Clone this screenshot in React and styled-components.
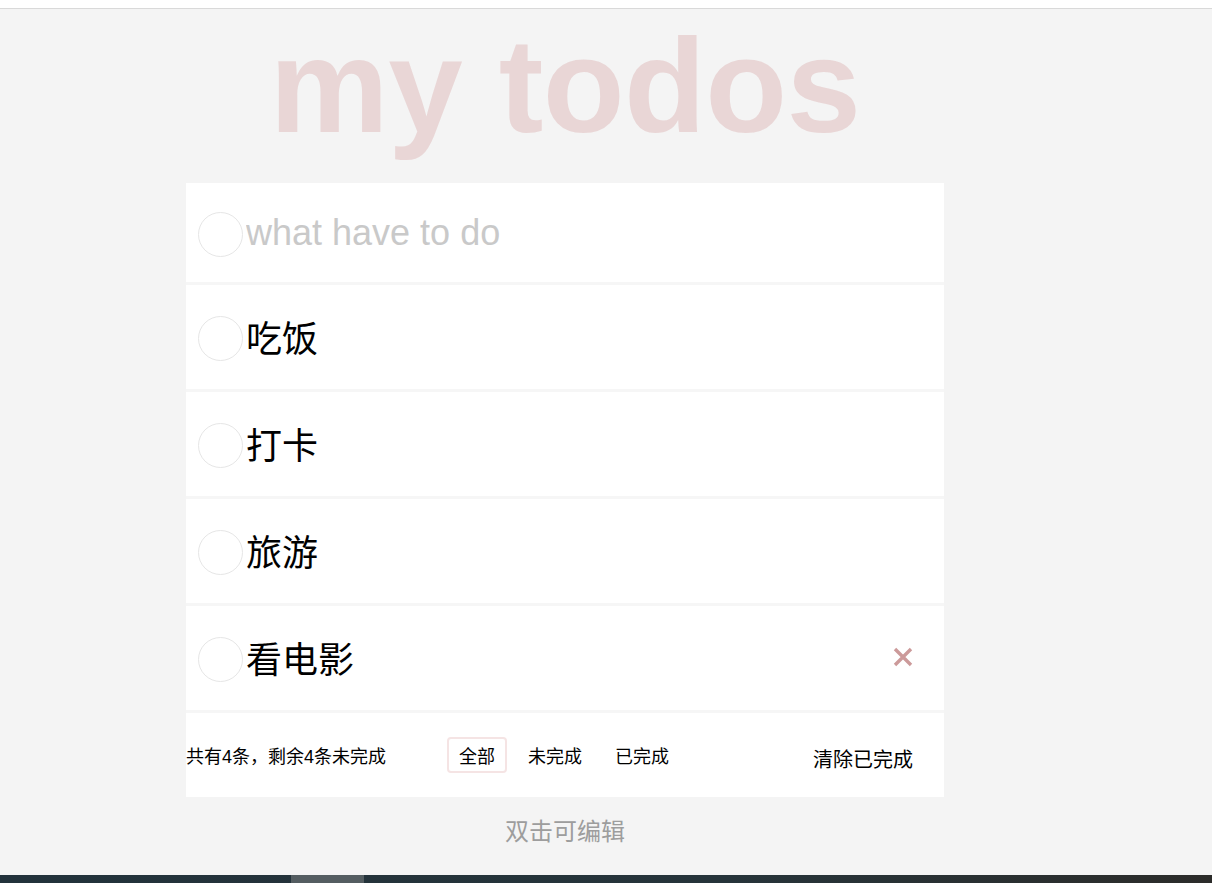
import React from "react";
import styled, { createGlobalStyle } from "styled-components";

const GlobalStyle = createGlobalStyle`
  html, body {
    margin: 0;
    padding: 0;
    background: #fff;
  }
  body {
    font-family: "Liberation Sans", "Noto Sans CJK SC", sans-serif;
    color: #000;
  }
`;

const Page = styled.div`
  margin-top: 8px;
  border-top: 1px solid #d9d9d9;
  background: #f4f4f4;
  height: 874px;
  display: flex;
  flex-direction: column;
`;

const Main = styled.div`
  flex: 1;
  width: 1130px;
  display: flex;
  flex-direction: column;
  align-items: center;
`;

const Title = styled.h1`
  margin: 3px 0 17px;
  height: 154px;
  font-family: "Liberation Sans", sans-serif;
  font-weight: bold;
  font-size: 134px;
  letter-spacing: -0.6px;
  color: rgba(175, 47, 47, 0.15);
  line-height: 148px;
`;

const Card = styled.section`
  width: 758px;
  background: #fff;
`;

const Row = styled.div`
  height: ${(p) => p.h}px;
  border-bottom: 3px solid #f6f6f6;
  display: flex;
  align-items: center;
  padding: 0 31px 0 12px;
`;

const Toggle = styled.span`
  width: 45px;
  height: 45px;
  box-sizing: border-box;
  border: 1px solid #e6e6e6;
  border-radius: 50%;
  flex-shrink: 0;
  margin-top: ${(p) => p.offset || 0}px;
`;

const NewTodo = styled.input`
  flex: 1;
  border: none;
  outline: none;
  margin-left: 3px;
  padding: 0;
  font-family: "Liberation Sans", "Noto Sans CJK SC", sans-serif;
  font-size: 36px;
  color: #000;
  background: transparent;
  &::placeholder {
    color: #c9c9c9;
  }
`;

const Label = styled.label`
  flex: 1;
  margin-left: 3px;
  padding-top: 6px;
  font-size: 36px;
  line-height: 1.2;
`;

const Destroy = styled.button`
  border: none;
  background: none;
  padding: 0;
  width: 20px;
  height: 20px;
  display: flex;
  margin-top: -3px;
  cursor: pointer;
`;

const Footer = styled.footer`
  height: 84px;
  display: grid;
  grid-template-columns: 1fr auto 1fr;
  align-items: center;
`;

const Count = styled.span`
  justify-self: start;
  font-size: 18px;
`;

const Filters = styled.ul`
  display: flex;
  gap: 9px;
  margin: 0 0 0 -2px;
  padding: 0;
  list-style: none;
`;

const Filter = styled.li`
  padding: 0 10px;
  height: 32px;
  display: flex;
  align-items: center;
  border: 2px solid ${(p) => (p.active ? "rgba(175, 47, 47, 0.13)" : "transparent")};
  border-radius: 4px;
  font-size: 18px;
`;

const Clear = styled.button`
  justify-self: end;
  margin: 6px 31px 0 0;
  border: none;
  background: none;
  padding: 0;
  font-family: "Liberation Sans", "Noto Sans CJK SC", sans-serif;
  font-size: 20px;
  color: #000;
`;

const Hint = styled.p`
  margin: 15px 0 0;
  font-size: 24px;
  color: #9d9d9d;
`;

const Taskbar = styled.div`
  height: 8px;
  display: flex;
  background: linear-gradient(90deg, #22323b 0%, #26343a 60%, #2c2c2a 100%);
`;

const TaskGap = styled.div`
  width: 291px;
`;

const TaskActive = styled.div`
  width: 73px;
  background: #545d61;
`;

const todos = ["吃饭", "打卡", "旅游", "看电影"];

export default function App() {
  return (
    <>
      <GlobalStyle />
      <Page>
        <Main>
          <Title>my todos</Title>
          <Card>
            <Row h={99}>
              <Toggle offset={4} />
              <NewTodo placeholder="what have to do" />
            </Row>
            {todos.map((t, i) => (
              <Row h={104} key={t}>
                <Toggle offset={2} />
                <Label>{t}</Label>
                {i === todos.length - 1 && (
                  <Destroy aria-label="删除">
                    <svg width="20" height="20" viewBox="0 0 20 20">
                      <path
                        d="M2 2 L18 18 M18 2 L2 18"
                        stroke="#cc9a9a"
                        strokeWidth="3.4"
                      />
                    </svg>
                  </Destroy>
                )}
              </Row>
            ))}
            <Footer>
              <Count>共有4条，剩余4条未完成</Count>
              <Filters>
                <Filter active>全部</Filter>
                <Filter>未完成</Filter>
                <Filter>已完成</Filter>
              </Filters>
              <Clear>清除已完成</Clear>
            </Footer>
          </Card>
          <Hint>双击可编辑</Hint>
        </Main>
        <Taskbar>
          <TaskGap />
          <TaskActive />
        </Taskbar>
      </Page>
    </>
  );
}
